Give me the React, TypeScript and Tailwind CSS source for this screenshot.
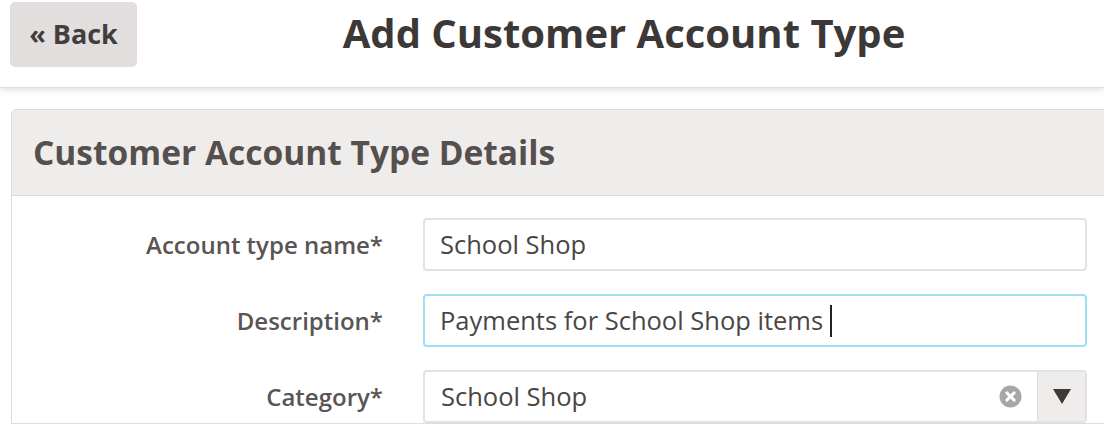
import React from "react";

const font = { fontFamily: "'Open Sans', 'Noto Sans', sans-serif" };

function Row({ label, children }: { label: string; children: React.ReactNode }) {
  return (
    <div className="flex items-center h-[53px]">
      <div className="w-[374px] pr-[3px] text-right text-[24px] font-semibold text-[#5a5553]">{label}</div>
      <div className="ml-[37px] w-[664px]">{children}</div>
    </div>
  );
}

export default function App() {
  return (
    <div className="w-[1104px] h-[438px] overflow-hidden bg-white" style={font}>
      <div className="h-[88px] flex items-start border-b border-[#dcdcdc] shadow-[0_2px_6px_rgba(0,0,0,0.12)] relative z-10">
        <button className="mt-[2px] ml-[10px] w-[127px] h-[65px] rounded-[5px] bg-[#e2dedd] text-[#423e3d] text-[27px] font-bold flex items-center justify-center">
          « Back
        </button>
        <div className="flex-1 text-center pl-[7px] pt-[9px] text-[40px] font-bold text-[#3c3838] leading-[48px]">
          Add Customer Account Type
        </div>
      </div>
      <div className="pt-[21px] pl-[11px]">
        <div className="w-[1110px] border border-[#dedcdb] rounded-t-[5px]">
          <div className="h-[86px] bg-[#efedec] border-b border-[#dedcdb] flex items-center pl-[21px] text-[33.5px] font-bold text-[#55504e]">
            Customer Account Type Details
          </div>
          <div className="pt-[22px] flex flex-col gap-[23px]">
            <Row label="Account type name*">
              <div className="h-[53px] border-2 border-[#e4e2e1] rounded-[4px] flex items-center pl-[15px] text-[25.5px] text-[#4a4644]">
                School Shop
              </div>
            </Row>
            <Row label="Description*">
              <div className="h-[53px] border-2 border-[#9be0f5] rounded-[4px] flex items-center pl-[15px] text-[25.5px] text-[#4a4644]">
                Payments for School Shop items
                <span className="ml-[7px] w-[2px] h-[32px] bg-[#222]" />
              </div>
            </Row>
            <Row label="Category*">
              <div className="h-[53px] border-2 border-[#e4e2e1] rounded-[4px] flex items-center text-[25.5px] text-[#4a4644] overflow-hidden">
                <div className="flex-1 pl-[16px]">School Shop</div>
                <div className="w-[54px] flex items-center justify-center">
                  <svg width="23" height="23" viewBox="0 0 22 22">
                    <circle cx="11" cy="11" r="10.5" fill="#a9a7a6" />
                    <path d="M7.5 7.5 L14.5 14.5 M14.5 7.5 L7.5 14.5" stroke="#fff" strokeWidth="2.8" strokeLinecap="round" />
                  </svg>
                </div>
                <div className="w-[48px] h-full bg-[#efedec] border-l border-[#e0dedd] flex items-center justify-center">
                  <svg width="20" height="17" viewBox="0 0 20 17">
                    <path d="M1 1 H19 L10 16 Z" fill="#3e3a39" />
                  </svg>
                </div>
              </div>
            </Row>
          </div>
        </div>
      </div>
    </div>
  );
}
